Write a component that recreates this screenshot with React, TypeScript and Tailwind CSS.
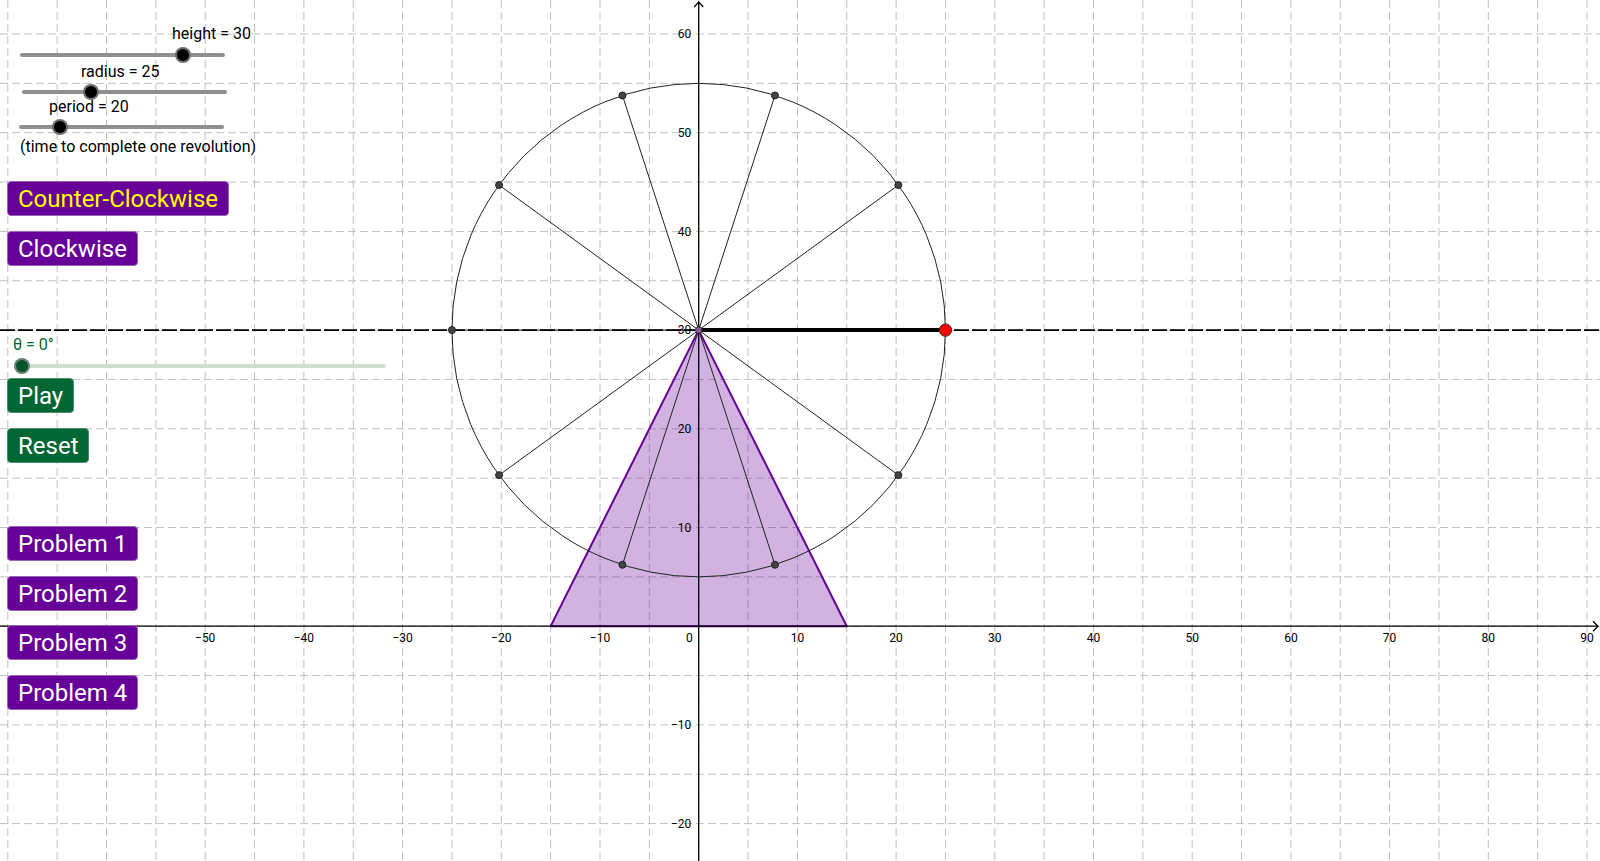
import React from 'react';

// graph coordinate system (px)
const OX = 698.7;
const OY = 626.2;
const S = 9.87; // px per unit
const W = 1600;
const H = 861;

const px = (x: number) => OX + x * S;
const py = (y: number) => OY - y * S;

const CX = px(0);
const CY = py(30);
const R = 25 * S;

const spokes = Array.from({ length: 10 }, (_, i) => {
  const a = (i * 36 * Math.PI) / 180;
  return { x: CX + R * Math.cos(a), y: CY - R * Math.sin(a), i };
});

const gridX: number[] = [];
for (let k = -14; k <= 18; k++) gridX.push(OX + k * 5 * S);
const gridY: number[] = [];
for (let k = -12; k <= 5; k++) gridY.push(OY + k * 5 * S);

const xLabels = [-50, -40, -30, -20, -10, 10, 20, 30, 40, 50, 60, 70, 80, 90];
const yLabels = [60, 50, 40, 30, 20, 10, -10, -20];

const fmt = (n: number) => (n < 0 ? `\u2212${-n}` : `${n}`);

const Graph: React.FC = () => (
  <svg width={W} height={H} className="absolute left-0 top-0">
    {/* grid */}
    <g stroke="#c0c0c0" strokeWidth={1} strokeDasharray="8 4">
      {gridX.map((x) => (
        <line key={`gx${x}`} x1={x} y1={0} x2={x} y2={H} />
      ))}
      {gridY.map((y) => (
        <line key={`gy${y}`} x1={0} y1={y} x2={W} y2={y} />
      ))}
    </g>

    {/* tower */}
    <polygon
      points={`${px(-15)},${py(0)} ${px(15)},${py(0)} ${px(0)},${py(30)}`}
      fill="#660099"
      fillOpacity={0.3}
      stroke="#660099"
      strokeWidth={2}
      strokeLinejoin="round"
    />

    {/* axes */}
    <g stroke="#000" strokeWidth={1.3} fill="none">
      <line x1={0} y1={OY} x2={W - 2} y2={OY} />
      <polyline points={`${W - 7},${OY - 5} ${W - 2},${OY} ${W - 7},${OY + 5}`} />
      <line x1={OX} y1={2} x2={OX} y2={H} />
      <polyline points={`${OX - 4.5},${7} ${OX},${2} ${OX + 4.5},${7}`} />
    </g>

    {/* axis labels */}
    <g fontSize={12} fill="#000" fontFamily='Roboto, "Liberation Sans", sans-serif'>
      {xLabels.map((n) => (
        <text key={`xl${n}`} x={px(n)} y={OY + 15.5} textAnchor="middle">
          {fmt(n)}
        </text>
      ))}
      <text x={OX - 6} y={OY + 15.5} textAnchor="end">
        0
      </text>
      {yLabels.map((n) => (
        <text key={`yl${n}`} x={OX - 7.5} y={py(n) + 4.3} textAnchor="end">
          {fmt(n)}
        </text>
      ))}
    </g>

    {/* wheel */}
    <circle cx={CX} cy={CY} r={R} fill="none" stroke="#222" strokeWidth={1} />
    <g stroke="#222" strokeWidth={1}>
      {spokes
        .filter((p) => p.i !== 0)
        .map((p) => (
          <line key={`sp${p.i}`} x1={CX} y1={CY} x2={p.x} y2={p.y} />
        ))}
    </g>

    {/* height line */}
    <line x1={0} y1={CY} x2={W} y2={CY} stroke="#000" strokeWidth={1.8} strokeDasharray="15 3" />
    <line x1={CX} y1={CY} x2={spokes[0].x} y2={CY} stroke="#000" strokeWidth={4} />

    {/* points */}
    {spokes
      .filter((p) => p.i !== 0)
      .map((p) => (
        <circle key={`pt${p.i}`} cx={p.x} cy={p.y} r={3.5} fill="#444" stroke="#222" strokeWidth={1} />
      ))}
    <circle cx={CX} cy={CY} r={3.2} fill="#8a5aa8" stroke="#333" strokeWidth={1} />
    <circle cx={spokes[0].x} cy={CY} r={6.2} fill="#ff0000" stroke="#333" strokeWidth={1} />
  </svg>
);

// track row: knob position comes from the slider value
const Track: React.FC<{ width: number; value: number; green?: boolean }> = ({ width, value, green }) => (
  <div className="relative flex h-4 items-center" style={{ width }}>
    <div className={`h-1 w-full rounded-full ${green ? 'bg-[#cfe0cf]' : 'bg-[#8f8f8f]'}`} />
    <div
      className={`absolute top-0 h-4 w-4 rounded-full border-2 border-[#8a8a8a]/80 ${green ? 'bg-[#00552b]' : 'bg-black'}`}
      style={{ left: value * width - 8 }}
    />
  </div>
);

const Btn: React.FC<{ label: string; className: string; green?: boolean; yellow?: boolean }> = ({
  label,
  className,
  green,
  yellow,
}) => (
  <button
    className={`flex h-[35px] items-center self-start rounded-[4px] border px-[10px] text-[24px] leading-none ${
      green ? 'bg-[#006633] border-[#4d8f6d]' : 'bg-[#660099] border-[#9466b3]'
    } ${yellow ? 'text-[#ffff00]' : 'text-white'} ${className}`}
  >
    {label}
  </button>
);

export default function App() {
  return (
    <div
      className="relative h-[861px] w-[1600px] overflow-hidden bg-white"
      style={{ fontFamily: 'Roboto, "Liberation Sans", sans-serif' }}
    >
      <Graph />

      <div className="absolute left-0 top-0 flex flex-col pl-[7px] pt-[26px] text-[16px] leading-4 text-black">
        {/* height */}
        <div className="ml-[165px] h-4 whitespace-nowrap">height = 30</div>
        <div className="ml-[13px] mt-[5px]">
          <Track width={205} value={0.794} />
        </div>
        {/* radius */}
        <div className="ml-[74px] mt-px h-4 whitespace-nowrap">radius = 25</div>
        <div className="ml-[15px] mt-1">
          <Track width={205} value={0.336} />
        </div>
        {/* period */}
        <div className="ml-[42px] -mt-px h-4 whitespace-nowrap">period = 20</div>
        <div className="ml-[12px] mt-1">
          <Track width={205} value={0.198} />
        </div>
        <div className="ml-[13px] mt-1 h-4 whitespace-nowrap">(time to complete one revolution)</div>

        <Btn label="Counter-Clockwise" yellow className="mt-[26px]" />
        <Btn label="Clockwise" className="mt-[15px]" />

        {/* theta */}
        <div className="ml-[6px] mt-[71px] h-4 whitespace-nowrap text-[16px] leading-4 text-[#006633]">θ = 0°</div>
        <div className="ml-[15px] mt-[5px]">
          <Track width={364} value={0.0} green />
        </div>
        <Btn label="Play" green className="mt-1" />
        <Btn label="Reset" green className="mt-[15px]" />

        <Btn label="Problem 1" className="mt-[63px]" />
        <Btn label="Problem 2" className="mt-[15px]" />
        <Btn label="Problem 3" className="mt-[14px]" />
        <Btn label="Problem 4" className="mt-[15px]" />
      </div>
    </div>
  );
}
